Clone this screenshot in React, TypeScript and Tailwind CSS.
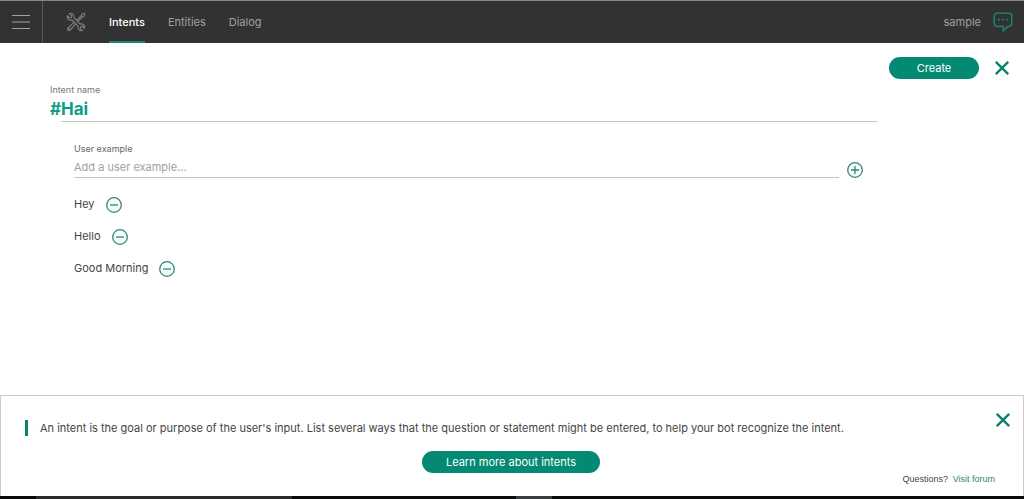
import React, { useState } from 'react';

const tabs = ['Intents', 'Entities', 'Dialog'];

const CloseIcon: React.FC = () => (
  <svg className="h-4 w-4" viewBox="0 0 16 16" fill="none" stroke="currentColor" strokeWidth="2.4" aria-hidden="true">
    <path d="M1.8 1.8 14.2 14.2M14.2 1.8 1.8 14.2" />
  </svg>
);

const CircleIcon: React.FC<{ plus?: boolean }> = ({ plus }) => (
  <svg className="h-4 w-4" viewBox="0 0 16 16" fill="none" stroke="currentColor" strokeWidth="1.3" aria-hidden="true">
    <circle cx="8" cy="8" r="7.3" fill="#f0fffc" />
    <path d={plus ? 'M4 8H12M8 4V12' : 'M4 8H12'} />
  </svg>
);

const ToolsIcon: React.FC = () => (
  <svg
    className="h-5 w-5"
    viewBox="0 0 20 20"
    fill="none"
    stroke="currentColor"
    strokeWidth="1.1"
    strokeLinejoin="round"
    strokeLinecap="round"
    aria-hidden="true"
  >
    <path d="M3.3 1.5 5.8 3.9 5.3 5.5 3.7 6 1.3 3.6C.7 5.8 1.9 8 4.3 8.2L5.9 8 12 14.1C11.4 16.7 13.7 19.3 16.4 18.5L14.2 16.3 14.7 14.7 16.3 14.2 18.5 16.4C19.2 13.8 16.8 11.4 14.1 12L8 5.9C8.8 3.2 6.1.6 3.3 1.5Z" />
    <path d="M10.5 8.4 15.5 3.4 15.9 2.1 18 1.2 18.8 2 17.9 4.1 16.6 4.5 11.6 9.5" />
    <path d="M8.2 10.3 2.2 15.6C.3 17.3 2.6 19.7 4.4 17.8L9.7 11.8" />
    <circle cx="3.4" cy="16.6" r=".4" />
  </svg>
);

const ChatIcon: React.FC = () => (
  <svg className="h-5 w-5" viewBox="0 0 20 20" fill="none" stroke="currentColor" strokeWidth="1.3" aria-hidden="true">
    <path d="M4.2 1.2H15.8A3 3 0 0 1 18.8 4.2V11.4A3 3 0 0 1 15.8 14.4H15L10.2 18.8V14.4H4.2A3 3 0 0 1 1.2 11.4V4.2A3 3 0 0 1 4.2 1.2Z" />
    <path d="M5.2 7.6H6.8M9.2 7.6H10.8M13.2 7.6H14.8" strokeWidth="1.6" />
  </svg>
);

const Header: React.FC = () => (
  <header className="flex h-[43px] items-stretch border-t border-[#858585] bg-[#323232] text-[#a0a0a0]">
    <button type="button" aria-label="Menu" className="flex w-[43px] items-center justify-center border-r border-[#5a5a5a]">
      <svg className="h-4 w-5" viewBox="0 0 20 16" stroke="currentColor" strokeWidth="1.2" aria-hidden="true">
        <path d="M1 1.5H19M1 8H19M1 14.5H19" />
      </svg>
    </button>
    <div className="flex items-center px-[23px] text-[#808080]">
      <ToolsIcon />
    </div>
    <nav className="flex gap-[23px] text-[11px]">
      {tabs.map((tab) => (
        <a
          key={tab}
          href={`#${tab.toLowerCase()}`}
          className={`flex items-center border-b-2 pt-0.5 ${
            tab === 'Intents' ? 'border-[#128a74] font-medium text-white' : 'border-transparent'
          }`}
        >
          {tab}
        </a>
      ))}
    </nav>
    <div className="ml-auto flex items-center gap-3 pr-[11px] text-[11px]">
      <span>sample</span>
      <button type="button" aria-label="Try it out" className="text-[#178f7b]">
        <ChatIcon />
      </button>
    </div>
  </header>
);

const IntentForm: React.FC = () => {
  const [name, setName] = useState('Hai');
  const [draft, setDraft] = useState('');
  const [examples, setExamples] = useState(['Hey', 'Hello', 'Good Morning']);

  const addExample = () => {
    if (!draft.trim()) return;
    setExamples([draft.trim(), ...examples]);
    setDraft('');
  };

  return (
    <main className="flex flex-1 items-start gap-3 pr-3.5 pl-[50px]">
      <div className="min-w-0 flex-1 pt-[39px]">
        <label htmlFor="intent-name" className="block text-[9px] leading-4 text-[#777]">
          Intent name
        </label>
        <div className="flex text-[17px] leading-[23px] font-bold text-[#0f9d84]">
          <span>#</span>
          <input
            id="intent-name"
            value={name}
            onChange={(e) => setName(e.target.value)}
            className="min-w-0 flex-1 border-b border-[#c4c4c4] outline-none"
          />
        </div>

        <div className="mt-[19px] pr-3.5 pl-6">
          <label htmlFor="user-example" className="block text-[9px] leading-4 text-[#666]">
            User example
          </label>
          <div className="flex items-center gap-2">
            <input
              id="user-example"
              value={draft}
              onChange={(e) => setDraft(e.target.value)}
              placeholder="Add a user example..."
              className="h-[21px] min-w-0 flex-1 border-b border-[#c4c4c4] text-[11px] outline-none placeholder:text-[#a0a0a0]"
            />
            <button type="button" aria-label="Add example" onClick={addExample} className="mt-1 text-[#3f7f76]">
              <CircleIcon plus />
            </button>
          </div>
          <ul className="mt-2.5 text-[11px] text-[#444]">
            {examples.map((example) => (
              <li key={example} className="flex h-8 items-center gap-[11px]">
                <span>{example}</span>
                <button
                  type="button"
                  aria-label={`Remove ${example}`}
                  onClick={() => setExamples(examples.filter((e) => e !== example))}
                  className="mt-0.5 text-[#3f7f76]"
                >
                  <CircleIcon />
                </button>
              </li>
            ))}
          </ul>
        </div>
      </div>

      <div className="flex items-center gap-[15px] pt-3.5">
        <button type="button" className="h-[22px] w-[90px] rounded-full bg-[#048a72] text-[11px] text-white">
          Create
        </button>
        <button type="button" aria-label="Close" className="text-[#0b836c]">
          <CloseIcon />
        </button>
      </div>
    </main>
  );
};

const HelpPanel: React.FC = () => (
  <aside className="border border-b-0 border-[#ccc] pt-4 pr-3 pb-[9px] pl-6 text-[11px] text-[#444]">
    <div className="flex items-start justify-between">
      <p className="mt-2 border-l-[3px] border-[#0b836c] pl-3 leading-4">
        An intent is the goal or purpose of the user's input. List several ways that the question or statement might be
        entered, to help your bot recognize the intent.
      </p>
      <button type="button" aria-label="Dismiss" className="text-[#0b836c]">
        <CloseIcon />
      </button>
    </div>
    <div className="mt-[15px] mr-3.5 grid grid-cols-[1fr_auto_1fr] items-start">
      <button type="button" className="col-start-2 h-[22px] rounded-full bg-[#048a72] px-6 text-white">
        Learn more about intents
      </button>
      <p className="mt-5 pr-0.5 text-right font-['Liberation_Sans',Arial,sans-serif] text-[9px] leading-4">
        Questions?{' '}
        <a href="#forum" className="ml-0.5 text-[#2f8573]">
          Visit forum
        </a>
      </p>
    </div>
  </aside>
);

export default function App() {
  return (
    <div className="flex min-h-screen flex-col bg-white font-[Inter,'Liberation_Sans',sans-serif]">
      <Header />
      <IntentForm />
      <HelpPanel />
      <div className="flex h-[3px] bg-[#0a0c0c]">
        <div className="ml-9 w-64 bg-[#2c2a2a]" />
        <div className="ml-56 w-9 bg-[#3a3d40]" />
      </div>
    </div>
  );
}
